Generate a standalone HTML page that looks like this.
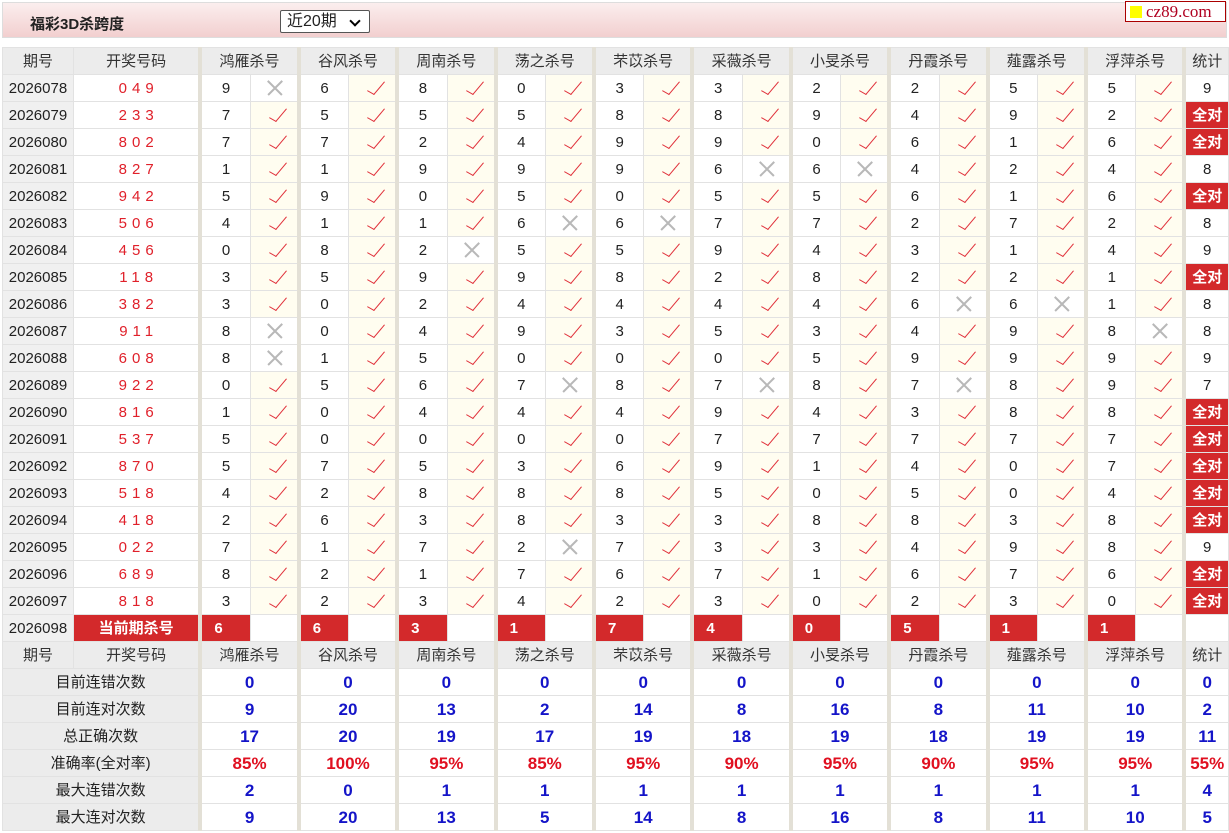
<!DOCTYPE html>
<html><head><meta charset="utf-8"><style>
*{margin:0;padding:0;box-sizing:border-box}
body{width:1229px;height:833px;background:#fff;font-family:"Liberation Sans","Noto Sans CJK SC",sans-serif;font-size:15px;color:#222;position:relative;overflow:hidden}
.top{position:absolute;left:2px;top:2px;width:1225px;height:36px;background:linear-gradient(#fbeeee,#f2cfcf);border:1px solid #ddd}
.ttl{position:absolute;left:27px;top:10px;font-weight:bold;font-size:15px;color:#222}
.sel{position:absolute;left:277px;top:7px;width:90px;height:23px;border:1px solid #555;border-radius:2px;background:#fff;font-size:16px;padding-left:6px;line-height:21px}
.sel::after{content:"";position:absolute;right:10px;top:6px;width:6px;height:6px;border-right:2px solid #000;border-bottom:2px solid #000;transform:rotate(45deg)}
.logo{position:absolute;left:1125px;top:1px;width:101px;height:21px;background:#fff;border:1px solid #a00;font-family:"Liberation Serif",serif;font-size:17px;color:#b00020;line-height:19px;padding-left:20px;white-space:nowrap;overflow:hidden}
.logo::before{content:"";position:absolute;left:4px;top:4px;width:12px;height:12px;background:#ff0}
table{position:absolute;left:2px;top:47px;border-collapse:collapse;table-layout:fixed}
td{height:27px;border:1px solid #e2e2e2;text-align:center;padding:0;white-space:nowrap;overflow:hidden;line-height:25px}
.h td{background:#ececec;color:#333}
td.q{background:#f0f0f0;color:#222;font-size:15px}
td.g{border-left:4px solid #e3e0d6}
td.n{color:#e0202a;letter-spacing:5px;padding-left:5px}
td.v,td.x{position:relative}
td.v{background:#fffdf0}
td.v::after{content:"";position:absolute;left:23px;top:3px;width:7px;height:16px;border-right:1.6px solid #e0303a;border-bottom:1.6px solid #e0303a;transform:rotate(40deg) skewY(-10deg)}
td.x::before,td.x::after{content:"";position:absolute;left:14px;top:12px;width:20px;height:1.5px;background:#b8b8b8;transform:rotate(45deg)}
td.x::after{transform:rotate(-45deg)}
td.a{background:#d3292b;color:#fff;font-weight:bold}
td.r{background:#d3292b;color:#fff;font-weight:bold;text-align:left;padding-left:12px}
td.l{background:#ececec;color:#222}
td.b{color:#1414c8;font-weight:bold;font-size:17px}
td.p{color:#e01020;font-weight:bold;font-size:17px}
</style></head><body>
<div class="top"><div class="ttl">福彩3D杀跨度</div><div class="sel">近20期</div></div>
<div class="logo">cz89.com</div>
<table>
<colgroup><col style="width:71px"><col style="width:127px"><col style="width:50px"><col style="width:48.5px"><col style="width:50px"><col style="width:48.5px"><col style="width:50px"><col style="width:48.5px"><col style="width:50px"><col style="width:48.5px"><col style="width:50px"><col style="width:48.5px"><col style="width:50px"><col style="width:48.5px"><col style="width:50px"><col style="width:48.5px"><col style="width:50px"><col style="width:48.5px"><col style="width:50px"><col style="width:48.5px"><col style="width:50px"><col style="width:48.5px"><col style="width:44px"></colgroup>
<tr class="h"><td>期号</td><td>开奖号码</td><td class="g" colspan="2">鸿雁杀号</td><td class="g" colspan="2">谷风杀号</td><td class="g" colspan="2">周南杀号</td><td class="g" colspan="2">荡之杀号</td><td class="g" colspan="2">芣苡杀号</td><td class="g" colspan="2">采薇杀号</td><td class="g" colspan="2">小旻杀号</td><td class="g" colspan="2">丹霞杀号</td><td class="g" colspan="2">薤露杀号</td><td class="g" colspan="2">浮萍杀号</td><td class="g" style="background:#ececec">统计</td></tr>
<tr><td class="q">2026078</td><td class="n">049</td><td class="g">9</td><td class="x"></td><td class="g">6</td><td class="v"></td><td class="g">8</td><td class="v"></td><td class="g">0</td><td class="v"></td><td class="g">3</td><td class="v"></td><td class="g">3</td><td class="v"></td><td class="g">2</td><td class="v"></td><td class="g">2</td><td class="v"></td><td class="g">5</td><td class="v"></td><td class="g">5</td><td class="v"></td><td class="g">9</td></tr>
<tr><td class="q">2026079</td><td class="n">233</td><td class="g">7</td><td class="v"></td><td class="g">5</td><td class="v"></td><td class="g">5</td><td class="v"></td><td class="g">5</td><td class="v"></td><td class="g">8</td><td class="v"></td><td class="g">8</td><td class="v"></td><td class="g">9</td><td class="v"></td><td class="g">4</td><td class="v"></td><td class="g">9</td><td class="v"></td><td class="g">2</td><td class="v"></td><td class="g a">全对</td></tr>
<tr><td class="q">2026080</td><td class="n">802</td><td class="g">7</td><td class="v"></td><td class="g">7</td><td class="v"></td><td class="g">2</td><td class="v"></td><td class="g">4</td><td class="v"></td><td class="g">9</td><td class="v"></td><td class="g">9</td><td class="v"></td><td class="g">0</td><td class="v"></td><td class="g">6</td><td class="v"></td><td class="g">1</td><td class="v"></td><td class="g">6</td><td class="v"></td><td class="g a">全对</td></tr>
<tr><td class="q">2026081</td><td class="n">827</td><td class="g">1</td><td class="v"></td><td class="g">1</td><td class="v"></td><td class="g">9</td><td class="v"></td><td class="g">9</td><td class="v"></td><td class="g">9</td><td class="v"></td><td class="g">6</td><td class="x"></td><td class="g">6</td><td class="x"></td><td class="g">4</td><td class="v"></td><td class="g">2</td><td class="v"></td><td class="g">4</td><td class="v"></td><td class="g">8</td></tr>
<tr><td class="q">2026082</td><td class="n">942</td><td class="g">5</td><td class="v"></td><td class="g">9</td><td class="v"></td><td class="g">0</td><td class="v"></td><td class="g">5</td><td class="v"></td><td class="g">0</td><td class="v"></td><td class="g">5</td><td class="v"></td><td class="g">5</td><td class="v"></td><td class="g">6</td><td class="v"></td><td class="g">1</td><td class="v"></td><td class="g">6</td><td class="v"></td><td class="g a">全对</td></tr>
<tr><td class="q">2026083</td><td class="n">506</td><td class="g">4</td><td class="v"></td><td class="g">1</td><td class="v"></td><td class="g">1</td><td class="v"></td><td class="g">6</td><td class="x"></td><td class="g">6</td><td class="x"></td><td class="g">7</td><td class="v"></td><td class="g">7</td><td class="v"></td><td class="g">2</td><td class="v"></td><td class="g">7</td><td class="v"></td><td class="g">2</td><td class="v"></td><td class="g">8</td></tr>
<tr><td class="q">2026084</td><td class="n">456</td><td class="g">0</td><td class="v"></td><td class="g">8</td><td class="v"></td><td class="g">2</td><td class="x"></td><td class="g">5</td><td class="v"></td><td class="g">5</td><td class="v"></td><td class="g">9</td><td class="v"></td><td class="g">4</td><td class="v"></td><td class="g">3</td><td class="v"></td><td class="g">1</td><td class="v"></td><td class="g">4</td><td class="v"></td><td class="g">9</td></tr>
<tr><td class="q">2026085</td><td class="n">118</td><td class="g">3</td><td class="v"></td><td class="g">5</td><td class="v"></td><td class="g">9</td><td class="v"></td><td class="g">9</td><td class="v"></td><td class="g">8</td><td class="v"></td><td class="g">2</td><td class="v"></td><td class="g">8</td><td class="v"></td><td class="g">2</td><td class="v"></td><td class="g">2</td><td class="v"></td><td class="g">1</td><td class="v"></td><td class="g a">全对</td></tr>
<tr><td class="q">2026086</td><td class="n">382</td><td class="g">3</td><td class="v"></td><td class="g">0</td><td class="v"></td><td class="g">2</td><td class="v"></td><td class="g">4</td><td class="v"></td><td class="g">4</td><td class="v"></td><td class="g">4</td><td class="v"></td><td class="g">4</td><td class="v"></td><td class="g">6</td><td class="x"></td><td class="g">6</td><td class="x"></td><td class="g">1</td><td class="v"></td><td class="g">8</td></tr>
<tr><td class="q">2026087</td><td class="n">911</td><td class="g">8</td><td class="x"></td><td class="g">0</td><td class="v"></td><td class="g">4</td><td class="v"></td><td class="g">9</td><td class="v"></td><td class="g">3</td><td class="v"></td><td class="g">5</td><td class="v"></td><td class="g">3</td><td class="v"></td><td class="g">4</td><td class="v"></td><td class="g">9</td><td class="v"></td><td class="g">8</td><td class="x"></td><td class="g">8</td></tr>
<tr><td class="q">2026088</td><td class="n">608</td><td class="g">8</td><td class="x"></td><td class="g">1</td><td class="v"></td><td class="g">5</td><td class="v"></td><td class="g">0</td><td class="v"></td><td class="g">0</td><td class="v"></td><td class="g">0</td><td class="v"></td><td class="g">5</td><td class="v"></td><td class="g">9</td><td class="v"></td><td class="g">9</td><td class="v"></td><td class="g">9</td><td class="v"></td><td class="g">9</td></tr>
<tr><td class="q">2026089</td><td class="n">922</td><td class="g">0</td><td class="v"></td><td class="g">5</td><td class="v"></td><td class="g">6</td><td class="v"></td><td class="g">7</td><td class="x"></td><td class="g">8</td><td class="v"></td><td class="g">7</td><td class="x"></td><td class="g">8</td><td class="v"></td><td class="g">7</td><td class="x"></td><td class="g">8</td><td class="v"></td><td class="g">9</td><td class="v"></td><td class="g">7</td></tr>
<tr><td class="q">2026090</td><td class="n">816</td><td class="g">1</td><td class="v"></td><td class="g">0</td><td class="v"></td><td class="g">4</td><td class="v"></td><td class="g">4</td><td class="v"></td><td class="g">4</td><td class="v"></td><td class="g">9</td><td class="v"></td><td class="g">4</td><td class="v"></td><td class="g">3</td><td class="v"></td><td class="g">8</td><td class="v"></td><td class="g">8</td><td class="v"></td><td class="g a">全对</td></tr>
<tr><td class="q">2026091</td><td class="n">537</td><td class="g">5</td><td class="v"></td><td class="g">0</td><td class="v"></td><td class="g">0</td><td class="v"></td><td class="g">0</td><td class="v"></td><td class="g">0</td><td class="v"></td><td class="g">7</td><td class="v"></td><td class="g">7</td><td class="v"></td><td class="g">7</td><td class="v"></td><td class="g">7</td><td class="v"></td><td class="g">7</td><td class="v"></td><td class="g a">全对</td></tr>
<tr><td class="q">2026092</td><td class="n">870</td><td class="g">5</td><td class="v"></td><td class="g">7</td><td class="v"></td><td class="g">5</td><td class="v"></td><td class="g">3</td><td class="v"></td><td class="g">6</td><td class="v"></td><td class="g">9</td><td class="v"></td><td class="g">1</td><td class="v"></td><td class="g">4</td><td class="v"></td><td class="g">0</td><td class="v"></td><td class="g">7</td><td class="v"></td><td class="g a">全对</td></tr>
<tr><td class="q">2026093</td><td class="n">518</td><td class="g">4</td><td class="v"></td><td class="g">2</td><td class="v"></td><td class="g">8</td><td class="v"></td><td class="g">8</td><td class="v"></td><td class="g">8</td><td class="v"></td><td class="g">5</td><td class="v"></td><td class="g">0</td><td class="v"></td><td class="g">5</td><td class="v"></td><td class="g">0</td><td class="v"></td><td class="g">4</td><td class="v"></td><td class="g a">全对</td></tr>
<tr><td class="q">2026094</td><td class="n">418</td><td class="g">2</td><td class="v"></td><td class="g">6</td><td class="v"></td><td class="g">3</td><td class="v"></td><td class="g">8</td><td class="v"></td><td class="g">3</td><td class="v"></td><td class="g">3</td><td class="v"></td><td class="g">8</td><td class="v"></td><td class="g">8</td><td class="v"></td><td class="g">3</td><td class="v"></td><td class="g">8</td><td class="v"></td><td class="g a">全对</td></tr>
<tr><td class="q">2026095</td><td class="n">022</td><td class="g">7</td><td class="v"></td><td class="g">1</td><td class="v"></td><td class="g">7</td><td class="v"></td><td class="g">2</td><td class="x"></td><td class="g">7</td><td class="v"></td><td class="g">3</td><td class="v"></td><td class="g">3</td><td class="v"></td><td class="g">4</td><td class="v"></td><td class="g">9</td><td class="v"></td><td class="g">8</td><td class="v"></td><td class="g">9</td></tr>
<tr><td class="q">2026096</td><td class="n">689</td><td class="g">8</td><td class="v"></td><td class="g">2</td><td class="v"></td><td class="g">1</td><td class="v"></td><td class="g">7</td><td class="v"></td><td class="g">6</td><td class="v"></td><td class="g">7</td><td class="v"></td><td class="g">1</td><td class="v"></td><td class="g">6</td><td class="v"></td><td class="g">7</td><td class="v"></td><td class="g">6</td><td class="v"></td><td class="g a">全对</td></tr>
<tr><td class="q">2026097</td><td class="n">818</td><td class="g">3</td><td class="v"></td><td class="g">2</td><td class="v"></td><td class="g">3</td><td class="v"></td><td class="g">4</td><td class="v"></td><td class="g">2</td><td class="v"></td><td class="g">3</td><td class="v"></td><td class="g">0</td><td class="v"></td><td class="g">2</td><td class="v"></td><td class="g">3</td><td class="v"></td><td class="g">0</td><td class="v"></td><td class="g a">全对</td></tr>
<tr><td class="q">2026098</td><td class="a">当前期杀号</td><td class="g r">6</td><td></td><td class="g r">6</td><td></td><td class="g r">3</td><td></td><td class="g r">1</td><td></td><td class="g r">7</td><td></td><td class="g r">4</td><td></td><td class="g r">0</td><td></td><td class="g r">5</td><td></td><td class="g r">1</td><td></td><td class="g r">1</td><td></td><td class="g"></td></tr>
<tr class="h"><td>期号</td><td>开奖号码</td><td class="g" colspan="2">鸿雁杀号</td><td class="g" colspan="2">谷风杀号</td><td class="g" colspan="2">周南杀号</td><td class="g" colspan="2">荡之杀号</td><td class="g" colspan="2">芣苡杀号</td><td class="g" colspan="2">采薇杀号</td><td class="g" colspan="2">小旻杀号</td><td class="g" colspan="2">丹霞杀号</td><td class="g" colspan="2">薤露杀号</td><td class="g" colspan="2">浮萍杀号</td><td class="g">统计</td></tr>
<tr><td class="l" colspan="2">目前连错次数</td><td class="g b" colspan="2">0</td><td class="g b" colspan="2">0</td><td class="g b" colspan="2">0</td><td class="g b" colspan="2">0</td><td class="g b" colspan="2">0</td><td class="g b" colspan="2">0</td><td class="g b" colspan="2">0</td><td class="g b" colspan="2">0</td><td class="g b" colspan="2">0</td><td class="g b" colspan="2">0</td><td class="g b">0</td></tr>
<tr><td class="l" colspan="2">目前连对次数</td><td class="g b" colspan="2">9</td><td class="g b" colspan="2">20</td><td class="g b" colspan="2">13</td><td class="g b" colspan="2">2</td><td class="g b" colspan="2">14</td><td class="g b" colspan="2">8</td><td class="g b" colspan="2">16</td><td class="g b" colspan="2">8</td><td class="g b" colspan="2">11</td><td class="g b" colspan="2">10</td><td class="g b">2</td></tr>
<tr><td class="l" colspan="2">总正确次数</td><td class="g b" colspan="2">17</td><td class="g b" colspan="2">20</td><td class="g b" colspan="2">19</td><td class="g b" colspan="2">17</td><td class="g b" colspan="2">19</td><td class="g b" colspan="2">18</td><td class="g b" colspan="2">19</td><td class="g b" colspan="2">18</td><td class="g b" colspan="2">19</td><td class="g b" colspan="2">19</td><td class="g b">11</td></tr>
<tr><td class="l" colspan="2">准确率(全对率)</td><td class="g p" colspan="2">85%</td><td class="g p" colspan="2">100%</td><td class="g p" colspan="2">95%</td><td class="g p" colspan="2">85%</td><td class="g p" colspan="2">95%</td><td class="g p" colspan="2">90%</td><td class="g p" colspan="2">95%</td><td class="g p" colspan="2">90%</td><td class="g p" colspan="2">95%</td><td class="g p" colspan="2">95%</td><td class="g p">55%</td></tr>
<tr><td class="l" colspan="2">最大连错次数</td><td class="g b" colspan="2">2</td><td class="g b" colspan="2">0</td><td class="g b" colspan="2">1</td><td class="g b" colspan="2">1</td><td class="g b" colspan="2">1</td><td class="g b" colspan="2">1</td><td class="g b" colspan="2">1</td><td class="g b" colspan="2">1</td><td class="g b" colspan="2">1</td><td class="g b" colspan="2">1</td><td class="g b">4</td></tr>
<tr><td class="l" colspan="2">最大连对次数</td><td class="g b" colspan="2">9</td><td class="g b" colspan="2">20</td><td class="g b" colspan="2">13</td><td class="g b" colspan="2">5</td><td class="g b" colspan="2">14</td><td class="g b" colspan="2">8</td><td class="g b" colspan="2">16</td><td class="g b" colspan="2">8</td><td class="g b" colspan="2">11</td><td class="g b" colspan="2">10</td><td class="g b">5</td></tr>
</table>
</body></html>
